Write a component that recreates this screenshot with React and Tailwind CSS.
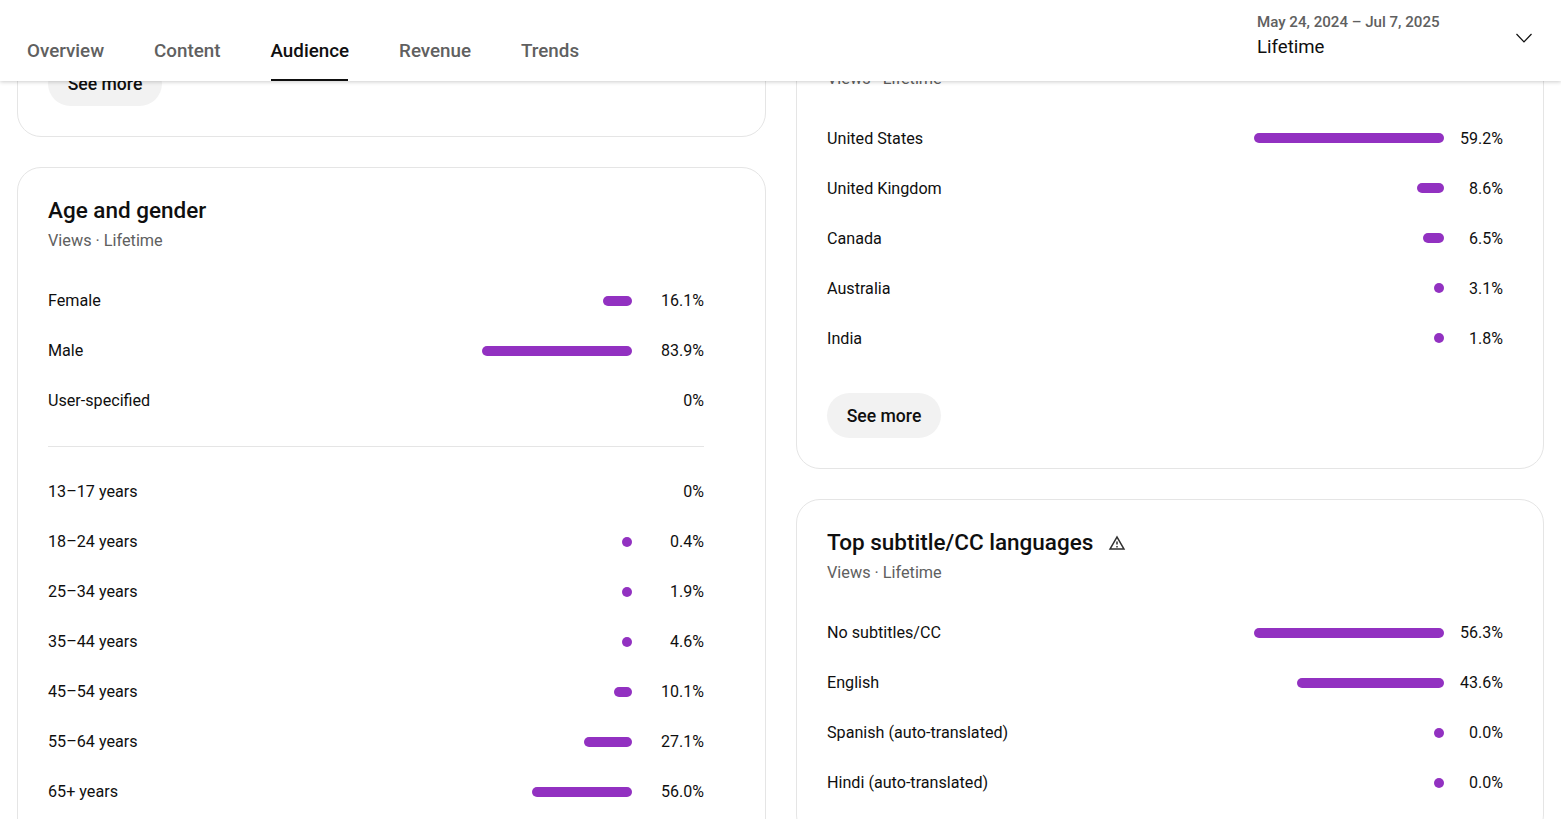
import React from "react";

const tabs = ["Overview", "Content", "Audience", "Revenue", "Trends"];

const gender = [
  ["Female", 29, "16.1%"],
  ["Male", 150, "83.9%"],
  ["User-specified", 0, "0%"],
];
const ages = [
  ["13–17 years", 0, "0%"],
  ["18–24 years", 10, "0.4%"],
  ["25–34 years", 10, "1.9%"],
  ["35–44 years", 10, "4.6%"],
  ["45–54 years", 18, "10.1%"],
  ["55–64 years", 48, "27.1%"],
  ["65+ years", 100, "56.0%"],
];
const geo = [
  ["United States", 190, "59.2%"],
  ["United Kingdom", 27, "8.6%"],
  ["Canada", 21, "6.5%"],
  ["Australia", 10, "3.1%"],
  ["India", 10, "1.8%"],
];
const subs = [
  ["No subtitles/CC", 190, "56.3%"],
  ["English", 147, "43.6%"],
  ["Spanish (auto-translated)", 10, "0.0%"],
  ["Hindi (auto-translated)", 10, "0.0%"],
];

function Row({ label, width, value, wide, low }) {
  return (
    <div className="flex h-[50px] items-center text-[16px] text-[#0f0f0f]">
      <span className={low ? "flex-1 pt-[2px] text-[16.15px]" : "flex-1 text-[16.15px]"}>{label}</span>
      {width > 0 && <span className="h-[10px] rounded-full bg-[#9231c1]" style={{ width }} />}
      <span className={(wide ? "w-[59px] text-right" : "w-[72px] text-right") + (low ? " pt-[2px]" : "")}>{value}</span>
    </div>
  );
}

function SeeMore() {
  return (
    <button className="flex h-[45px] w-[114px] items-center justify-center rounded-full bg-[#f2f2f2] pt-[2px] text-[17.6px] font-medium text-[#0f0f0f]">
      See more
    </button>
  );
}

function Sub() {
  return <p className="h-[24px] text-[16.25px] leading-[24px] text-[#606060]">Views · Lifetime</p>;
}

export default function App() {
  return (
    <div className="h-[819px] overflow-hidden bg-white font-['Roboto',sans-serif]">
      <header className="relative z-10 flex h-[81px] bg-white pl-[27px] shadow-[0_1px_4px_rgba(0,0,0,0.2)]">
        <nav className="flex flex-1 items-end gap-[50px]">
          {tabs.map((t) => (
            <div
              key={t}
              className={
                t === "Audience"
                  ? "relative flex h-[62px] items-center pt-[2px] text-[18.8px] font-medium text-[#0f0f0f]"
                  : "flex h-[62px] items-center pt-[2px] text-[18.8px] font-medium text-[#606060]"
              }
            >
              {t}
              {t === "Audience" && <span className="absolute bottom-0 left-0 h-[2px] w-[77px] bg-[#0f0f0f]" />}
            </div>
          ))}
        </nav>
        <div className="flex w-[304px] pt-[12px]">
          <div className="flex-1">
            <p className="h-[20px] text-[15.1px] leading-[20px] font-medium text-[#606060]">May 24, 2024 – Jul 7, 2025</p>
            <p className="mt-[1px] h-[29px] text-[18.6px] leading-[29px] text-[#0f0f0f]">Lifetime</p>
          </div>
          <svg viewBox="0 0 18 10" className="mt-[21px] mr-[28px] h-[10px] w-[18px]" fill="none" stroke="#0f0f0f" strokeWidth="1.2">
            <path d="M1.5 1 9 8.8 16.5 1" />
          </svg>
        </div>
      </header>

      <main className="grid grid-cols-[749px_748px] items-start gap-x-[30px] pl-[17px]">
        <div className="-mt-[100px] flex flex-col gap-[30px]">
          <section className="rounded-[24px] border border-[#e5e5e5] px-[30px] pt-[79px] pb-[30px]">
            <SeeMore />
          </section>
          <section className="rounded-[24px] border border-[#e5e5e5] pt-[25px] pr-[61px] pb-[30px] pl-[30px]">
            <h2 className="h-[36px] pb-[2px] text-[22.5px] leading-[34px] font-medium text-[#0f0f0f]">Age and gender</h2>
            <Sub />
            <div className="mt-[23px]">
              {gender.map((r) => (
                <Row key={r[0]} label={r[0]} width={r[1]} value={r[2]} />
              ))}
            </div>
            <div className="my-[20px] border-t border-[#e5e5e5]" />
            {ages.map((r) => (
              <Row key={r[0]} label={r[0]} width={r[1]} value={r[2]} />
            ))}
          </section>
        </div>

        <div className="-mt-[100px] flex flex-col gap-[30px]">
          <section className="rounded-[24px] border border-[#e5e5e5] pt-[85px] pr-[40px] pb-[30px] pl-[30px]">
            <Sub />
            <div className="mt-[22px]">
              {geo.map((r) => (
                <Row key={r[0]} label={r[0]} width={r[1]} value={r[2]} wide low />
              ))}
            </div>
            <div className="mt-[30px]">
              <SeeMore />
            </div>
          </section>
          <section className="rounded-[24px] border border-[#e5e5e5] pt-[25px] pr-[40px] pb-[30px] pl-[30px]">
            <div className="flex h-[36px] items-center gap-[15px] pb-[2px]">
              <h2 className="text-[22.5px] leading-[34px] font-medium text-[#0f0f0f]">Top subtitle/CC languages</h2>
              <svg viewBox="0 0 24 24" className="mt-[2px] h-[18px] w-[18px]" fill="#303030">
                <path d="M12 5.99 19.53 19H4.47L12 5.99M12 2 1 21h22L12 2zm1 14h-2v2h2v-2zm0-6h-2v4h2v-4z" />
              </svg>
            </div>
            <Sub />
            <div className="mt-[23px]">
              {subs.map((r) => (
                <Row key={r[0]} label={r[0]} width={r[1]} value={r[2]} wide />
              ))}
            </div>
          </section>
        </div>
      </main>
    </div>
  );
}
